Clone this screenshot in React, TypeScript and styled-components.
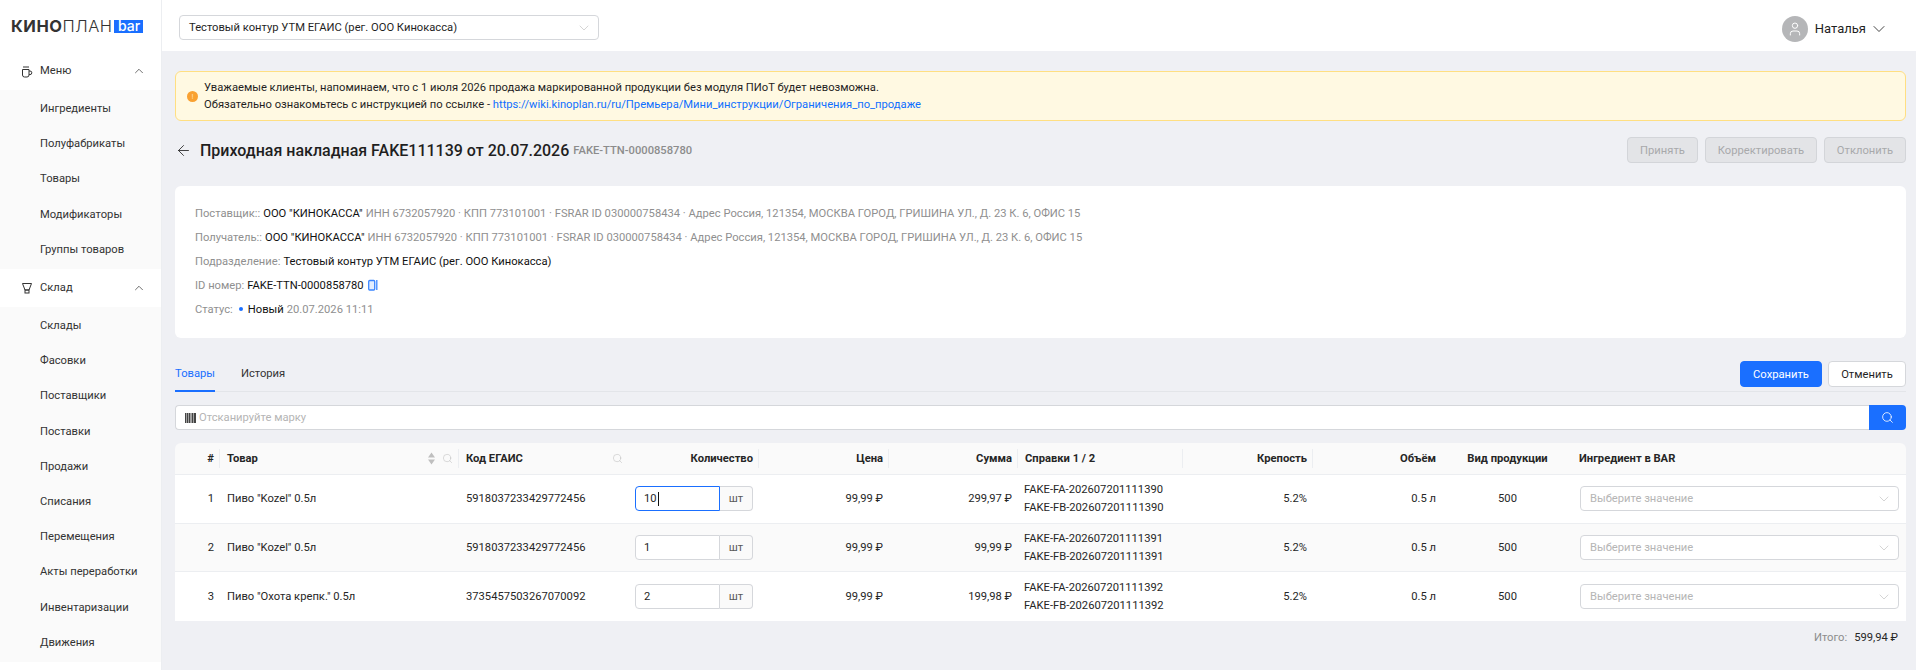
import React from 'react';
import styled, { createGlobalStyle } from 'styled-components';
import { ArrowLeft, ChevronDown, ChevronUp, Search, User } from 'lucide-react';

const GlobalStyle = createGlobalStyle`
  html, body {
    margin: 0;
    padding: 0;
    height: 670px;
    overflow: hidden;
    background: #eff0f4;
    font-family: Roboto, 'Liberation Sans', sans-serif;
    font-size: 11.2px;
    color: #1f1f1f;
  }
  * {
    box-sizing: border-box;
  }
`;

const Layout = styled.div`
  display: flex;
  width: 1916px;
  height: 670px;
  overflow: hidden;
`;

const Sidebar = styled.aside`
  flex: 0 0 162px;
  background: #fff;
  border-right: 1px solid #eceef1;
`;

const LogoRow = styled.div`
  display: flex;
  align-items: center;
  height: 51px;
  padding: 1px 0 0 11px;
`;

const LogoText = styled.span`
  font-family: Inter, sans-serif;
  font-size: 16.5px;
  font-weight: 700;
  letter-spacing: 0.5px;
  color: #333;
`;

const LogoLight = styled.span`
  font-weight: 300;
`;

const LogoBadge = styled.span`
  margin-left: 2px;
  width: 29px;
  height: 13px;
  background: #1a6fff;
  color: #fff;
  font-family: Inter, sans-serif;
  font-size: 14px;
  font-weight: 500;
  line-height: 11px;
  text-align: center;
`;

const MenuHead = styled.div<{ $height: number }>`
  display: flex;
  align-items: center;
  height: ${(p) => p.$height}px;
  padding: 0 15px 0 21px;
  color: #333;
`;

const MenuIcon = styled.svg`
  width: 12px;
  height: 14px;
  margin-right: 7px;
  fill: none;
  stroke: #333;
  stroke-width: 1;
`;

const MenuLabel = styled.span`
  flex: 1;
`;

const SubMenu = styled.div`
  background: #fafafa;
  padding: 1px 0 2px;
`;

const SubItem = styled.div`
  display: flex;
  align-items: center;
  height: 35.2px;
  padding-left: 40px;
  color: #333;
`;

const Main = styled.main`
  flex: 1;
  min-width: 0;
`;

const Header = styled.header`
  display: flex;
  align-items: center;
  justify-content: space-between;
  height: 51px;
  padding: 4px 27px 0 17px;
  background: #fff;
`;

const Select = styled.div<{ $width?: string }>`
  display: flex;
  align-items: center;
  justify-content: space-between;
  width: ${(p) => p.$width || '100%'};
  height: 25px;
  padding: 0 6px 0 9px;
  background: #fff;
  border: 1px solid #d5d7db;
  border-radius: 4px;
`;

const SelectValue = styled.span<{ $placeholder?: boolean }>`
  color: ${(p) => (p.$placeholder ? '#b5b5b5' : '#1f1f1f')};
`;

const UserBox = styled.div`
  display: flex;
  align-items: center;
  margin-top: 2px;
  font-size: 13px;
  color: #1f1f1f;
`;

const Avatar = styled.span`
  display: flex;
  align-items: center;
  justify-content: center;
  width: 26px;
  height: 26px;
  margin-right: 7px;
  border-radius: 50%;
  background: #b5b6b8;
  color: #fff;
`;

const UserName = styled.span`
  margin-right: 3px;
`;

const Content = styled.div`
  padding: 20px 10px 0 13px;
`;

const Alert = styled.div`
  display: flex;
  align-items: center;
  height: 50px;
  padding: 0 11px;
  background: #fff9e2;
  border: 1px solid #ffdf82;
  border-radius: 6px;
  line-height: 17px;
  color: #1f1f1f;
`;

const AlertIcon = styled.span`
  flex: 0 0 11px;
  height: 11px;
  margin-right: 6px;
  border-radius: 50%;
  background: #f9a131;
  color: #ffe0ae;
  font-size: 8px;
  line-height: 11px;
  text-align: center;
`;

const Link = styled.a`
  color: #0f6fff;
`;

const TitleRow = styled.div`
  display: flex;
  align-items: center;
  justify-content: space-between;
  height: 26px;
  margin-top: 16px;
`;

const TitleLeft = styled.div`
  display: flex;
  align-items: center;
`;

const BackIcon = styled(ArrowLeft)`
  margin-right: 8px;
  color: #222;
`;

const Title = styled.h1`
  margin: 0;
  font-size: 16px;
  font-weight: 500;
  color: #1f1f1f;
`;

const TitleCode = styled.span`
  margin-left: 4px;
  font-size: 11.2px;
  font-weight: 500;
  color: #8c8c8c;
`;

const ButtonGroup = styled.div<{ $gap: number }>`
  display: flex;
  gap: ${(p) => p.$gap}px;
`;

const Button = styled.button<{ $variant: 'primary' | 'default' | 'disabled'; $width: number }>`
  width: ${(p) => p.$width}px;
  height: 26px;
  padding: 0;
  border-radius: 4px;
  font-family: inherit;
  font-size: 11.2px;
  border: 1px solid
    ${(p) => (p.$variant === 'primary' ? '#1a6fff' : p.$variant === 'default' ? '#d5d7db' : '#d3d5d9')};
  background: ${(p) =>
    p.$variant === 'primary' ? '#1a6fff' : p.$variant === 'default' ? '#fff' : '#e3e4e7'};
  color: ${(p) =>
    p.$variant === 'primary' ? '#fff' : p.$variant === 'default' ? '#1f1f1f' : '#a8a9ab'};
`;

const Card = styled.section`
  height: 152px;
  margin-top: 23px;
  padding: 15px 20px;
  background: #fff;
  border-radius: 6px;
`;

const InfoLine = styled.div`
  display: flex;
  align-items: center;
  height: 24px;
  color: #8f8f8f;
`;

const Strong = styled.span`
  margin-left: 3px;
  margin-right: 3px;
  color: #111;
`;

const CopyIcon = styled.svg`
  width: 10px;
  height: 12px;
  margin-left: 1px;
  fill: #e3eeff;
  stroke: #3b86ff;
  stroke-width: 1.3;
`;

const StatusDot = styled.span`
  width: 4px;
  height: 4px;
  margin-left: 6px;
  margin-right: 2px;
  border-radius: 50%;
  background: #1a6fff;
`;

const TabBar = styled.div`
  display: flex;
  align-items: flex-start;
  justify-content: space-between;
  height: 31px;
  margin-top: 23px;
  border-bottom: 1px solid #e3e5e9;
`;

const Tabs = styled.div`
  display: flex;
  gap: 26px;
`;

const Tab = styled.div<{ $active?: boolean }>`
  height: 31px;
  line-height: 25px;
  color: ${(p) => (p.$active ? '#1a6fff' : '#333')};
  border-bottom: 2px solid ${(p) => (p.$active ? '#1a6fff' : 'transparent')};
`;

const ScanBar = styled.div`
  display: flex;
  height: 25px;
  margin-top: 13px;
`;

const ScanInput = styled.div`
  flex: 1;
  display: flex;
  align-items: center;
  padding-left: 9px;
  background: #fff;
  border: 1px solid #d5d7db;
  border-right: none;
  border-radius: 4px 0 0 4px;
  color: #b5b5b5;
`;

const BarcodeIcon = styled.svg`
  width: 11px;
  height: 10px;
  margin-right: 3px;
`;

const ScanButton = styled.div`
  flex: 0 0 37px;
  display: flex;
  align-items: center;
  justify-content: center;
  background: #1a6fff;
  color: #fff;
  border-radius: 0 4px 4px 0;
`;

const Table = styled.div`
  margin-top: 13px;
  border-radius: 6px 6px 0 0;
  overflow: hidden;
`;

const gridColumns = '45px 239px 170px 130px 130px 129px 165px 130px 129px 130px 1fr';

const HeadRow = styled.div`
  display: grid;
  grid-template-columns: ${gridColumns};
  height: 32px;
  background: #fafafa;
  border-bottom: 1px solid #eceef1;
`;

const BodyRow = styled.div<{ $striped?: boolean }>`
  display: grid;
  grid-template-columns: ${gridColumns};
  height: 48.7px;
  background: ${(p) => (p.$striped ? '#fafafa' : '#fff')};
  border-bottom: 1px solid #eceef1;

  &:last-child {
    border-bottom: none;
  }
`;

type Align = 'left' | 'right' | 'center';

const justifyOf = (a?: Align) =>
  a === 'right' ? 'flex-end' : a === 'center' ? 'center' : 'flex-start';

const HeadCell = styled.div<{ $align?: Align; $sep?: boolean }>`
  position: relative;
  display: flex;
  align-items: center;
  justify-content: ${(p) => justifyOf(p.$align)};
  padding: 0 6px 0 7px;
  font-weight: 700;
  color: #262626;

  &::after {
    content: '';
    display: ${(p) => (p.$sep ? 'block' : 'none')};
    position: absolute;
    right: 0;
    top: 6px;
    bottom: 6px;
    width: 1px;
    background: #eceef1;
  }
`;

const HeadLabel = styled.span`
  flex: 1;
`;

const HeadIcons = styled.span`
  display: flex;
  align-items: center;
  gap: 7px;
  color: #bfbfbf;
`;

const SortIcon = styled.svg`
  width: 7px;
  height: 13px;
  fill: #bfbfbf;
`;

const Cell = styled.div<{ $align?: Align }>`
  display: flex;
  align-items: center;
  justify-content: ${(p) => justifyOf(p.$align)};
  padding: 0 6px 0 7px;
  color: #262626;
`;

const RefCell = styled.div`
  display: flex;
  flex-direction: column;
  justify-content: center;
  padding: 0 6px;
  line-height: 18px;
  color: #262626;
`;

const QtyCell = styled.div`
  display: flex;
  align-items: center;
  padding-left: 6px;
`;

const QtyInput = styled.div<{ $focused?: boolean }>`
  display: flex;
  align-items: center;
  width: 85px;
  height: 25px;
  padding-left: 8px;
  background: #fff;
  border: 1px solid ${(p) => (p.$focused ? '#1a6fff' : '#d5d7db')};
  border-radius: 4px 0 0 4px;
`;

const Caret = styled.span`
  width: 1px;
  height: 14px;
  margin-left: 1px;
  background: #111;
`;

const QtyUnit = styled.div`
  display: flex;
  align-items: center;
  justify-content: center;
  width: 33px;
  height: 25px;
  background: #fafafa;
  border: 1px solid #d5d7db;
  border-left: none;
  border-radius: 0 4px 4px 0;
  color: #595959;
`;

const SelectCell = styled.div`
  display: flex;
  align-items: center;
  padding: 0 7px 0 8px;
`;

const TotalRow = styled.div`
  display: flex;
  justify-content: flex-end;
  gap: 7px;
  margin-top: 10px;
  padding-right: 8px;
  color: #262626;
`;

const TotalLabel = styled.span`
  color: #8c8c8c;
`;

const Chevron = styled(ChevronDown)`
  color: #bfbfbf;
`;

const CupIcon = () => (
  <MenuIcon viewBox="0 0 12 14">
    <path d="M1.5 5.5h6.5v5.5a2 2 0 0 1-2 2H3.5a2 2 0 0 1-2-2z" />
    <path d="M8 7h1a1.7 1.7 0 0 1 0 3.6H8" />
    <path d="M3 2v2M5 2v2M7 2v2" />
  </MenuIcon>
);

const GlassIcon = () => (
  <MenuIcon viewBox="0 0 12 14">
    <path d="M1.5 2.5h9L8 9H4z" />
    <rect x="4" y="9" width="4" height="3" />
  </MenuIcon>
);

const menuItems = ['Ингредиенты', 'Полуфабрикаты', 'Товары', 'Модификаторы', 'Группы товаров'];
const stockItems = [
  'Склады',
  'Фасовки',
  'Поставщики',
  'Поставки',
  'Продажи',
  'Списания',
  'Перемещения',
  'Акты переработки',
  'Инвентаризации',
  'Движения',
];

const partyInfo =
  'ИНН 6732057920 · КПП 773101001 · FSRAR ID 030000758434 · Адрес Россия, 121354, МОСКВА ГОРОД, ГРИШИНА УЛ., Д. 23 К. 6, ОФИС 15';

const rows = [
  { n: 1, name: 'Пиво "Kozel" 0.5л', code: '5918037233429772456', qty: '10', sum: '299,97 ₽', ref: '1390', focused: true },
  { n: 2, name: 'Пиво "Kozel" 0.5л', code: '5918037233429772456', qty: '1', sum: '99,99 ₽', ref: '1391' },
  { n: 3, name: 'Пиво "Охота крепк." 0.5л', code: '3735457503267070092', qty: '2', sum: '199,98 ₽', ref: '1392' },
];

const barcodeBars: [number, number][] = [
  [0, 1.5],
  [2, 1],
  [3.5, 1.5],
  [5.5, 1],
  [7, 1.5],
  [9, 2],
];

const App = () => {
  return (
    <Layout>
      <GlobalStyle />
      <Sidebar>
        <LogoRow>
          <LogoText>
            КИНО<LogoLight>ПЛАН</LogoLight>
          </LogoText>
          <LogoBadge>bar</LogoBadge>
        </LogoRow>
        <MenuHead $height={39}>
          <CupIcon />
          <MenuLabel>Меню</MenuLabel>
          <ChevronUp size={14} strokeWidth={1.2} />
        </MenuHead>
        <SubMenu>
          {menuItems.map((item) => (
            <SubItem key={item}>{item}</SubItem>
          ))}
        </SubMenu>
        <MenuHead $height={38}>
          <GlassIcon />
          <MenuLabel>Склад</MenuLabel>
          <ChevronUp size={14} strokeWidth={1.2} />
        </MenuHead>
        <SubMenu>
          {stockItems.map((item) => (
            <SubItem key={item}>{item}</SubItem>
          ))}
        </SubMenu>
      </Sidebar>
      <Main>
        <Header>
          <Select $width="420px">
            <SelectValue>Тестовый контур УТМ ЕГАИС (рег. ООО Кинокасса)</SelectValue>
            <Chevron size={16} strokeWidth={1} />
          </Select>
          <UserBox>
            <Avatar>
              <User size={16} strokeWidth={1.5} />
            </Avatar>
            <UserName>Наталья</UserName>
            <ChevronDown size={20} strokeWidth={1} />
          </UserBox>
        </Header>
        <Content>
          <Alert>
            <AlertIcon>!</AlertIcon>
            <div>
              Уважаемые клиенты, напоминаем, что с 1 июля 2026 продажа маркированной продукции без модуля ПИоТ будет
              невозможна.
              <br />
              Обязательно ознакомьтесь с инструкцией по ссылке -{' '}
              <Link>https://wiki.kinoplan.ru/ru/Премьера/Мини_инструкции/Ограничения_по_продаже</Link>
            </div>
          </Alert>
          <TitleRow>
            <TitleLeft>
              <BackIcon size={17} strokeWidth={1.2} />
              <Title>Приходная накладная FAKE111139 от 20.07.2026</Title>
              <TitleCode>FAKE-TTN-0000858780</TitleCode>
            </TitleLeft>
            <ButtonGroup $gap={7}>
              <Button $variant="disabled" $width={71}>
                Принять
              </Button>
              <Button $variant="disabled" $width={112}>
                Корректировать
              </Button>
              <Button $variant="disabled" $width={82}>
                Отклонить
              </Button>
            </ButtonGroup>
          </TitleRow>
          <Card>
            <InfoLine>
              Поставщик::<Strong>ООО "КИНОКАССА"</Strong>
              {partyInfo}
            </InfoLine>
            <InfoLine>
              Получатель::<Strong>ООО "КИНОКАССА"</Strong>
              {partyInfo}
            </InfoLine>
            <InfoLine>
              Подразделение:<Strong>Тестовый контур УТМ ЕГАИС (рег. ООО Кинокасса)</Strong>
            </InfoLine>
            <InfoLine>
              ID номер:<Strong>FAKE-TTN-0000858780</Strong>
              <CopyIcon viewBox="0 0 10 12">
                <rect x="0.7" y="1.5" width="6" height="9.5" rx="1" />
                <path d="M8.8 1v10" />
              </CopyIcon>
            </InfoLine>
            <InfoLine>
              Статус:
              <StatusDot />
              <Strong>Новый</Strong>
              20.07.2026 11:11
            </InfoLine>
          </Card>
          <TabBar>
            <Tabs>
              <Tab $active>Товары</Tab>
              <Tab>История</Tab>
            </Tabs>
            <ButtonGroup $gap={6}>
              <Button $variant="primary" $width={82}>
                Сохранить
              </Button>
              <Button $variant="default" $width={78}>
                Отменить
              </Button>
            </ButtonGroup>
          </TabBar>
          <ScanBar>
            <ScanInput>
              <BarcodeIcon viewBox="0 0 11 10">
                {barcodeBars.map(([x, w]) => (
                  <rect key={x} x={x} y="0" width={w} height="10" fill="#444" />
                ))}
              </BarcodeIcon>
              Отсканируйте марку
            </ScanInput>
            <ScanButton>
              <Search size={13} strokeWidth={1.5} />
            </ScanButton>
          </ScanBar>
          <Table>
            <HeadRow>
              <HeadCell $align="right" $sep>
                #
              </HeadCell>
              <HeadCell $sep>
                <HeadLabel>Товар</HeadLabel>
                <HeadIcons>
                  <SortIcon viewBox="0 0 7 13">
                    <path d="M3.5 0.5L7 5.5H0zM3.5 12.5L0 7.5h7z" />
                  </SortIcon>
                  <Search size={11} strokeWidth={1.2} />
                </HeadIcons>
              </HeadCell>
              <HeadCell>
                <HeadLabel>Код ЕГАИС</HeadLabel>
                <HeadIcons>
                  <Search size={11} strokeWidth={1.2} />
                </HeadIcons>
              </HeadCell>
              <HeadCell $align="right" $sep>
                Количество
              </HeadCell>
              <HeadCell $align="right" $sep>
                Цена
              </HeadCell>
              <HeadCell $align="right" $sep>
                Сумма
              </HeadCell>
              <HeadCell $sep>Справки 1 / 2</HeadCell>
              <HeadCell $align="right" $sep>
                Крепость
              </HeadCell>
              <HeadCell $align="right">Объём</HeadCell>
              <HeadCell $align="center">Вид продукции</HeadCell>
              <HeadCell>Ингредиент в BAR</HeadCell>
            </HeadRow>
            {rows.map((row, i) => (
              <BodyRow key={row.n} $striped={i === 1}>
                <Cell $align="right">{row.n}</Cell>
                <Cell>{row.name}</Cell>
                <Cell>{row.code}</Cell>
                <QtyCell>
                  <QtyInput $focused={row.focused}>
                    {row.qty}
                    {row.focused && <Caret />}
                  </QtyInput>
                  <QtyUnit>шт</QtyUnit>
                </QtyCell>
                <Cell $align="right">99,99 ₽</Cell>
                <Cell $align="right">{row.sum}</Cell>
                <RefCell>
                  <span>FAKE-FA-20260720111{row.ref}</span>
                  <span>FAKE-FB-20260720111{row.ref}</span>
                </RefCell>
                <Cell $align="right">5.2%</Cell>
                <Cell $align="right">0.5 л</Cell>
                <Cell $align="center">500</Cell>
                <SelectCell>
                  <Select>
                    <SelectValue $placeholder>Выберите значение</SelectValue>
                    <Chevron size={16} strokeWidth={1} />
                  </Select>
                </SelectCell>
              </BodyRow>
            ))}
          </Table>
          <TotalRow>
            <TotalLabel>Итого:</TotalLabel>
            599,94 ₽
          </TotalRow>
        </Content>
      </Main>
    </Layout>
  );
};

export default App;
